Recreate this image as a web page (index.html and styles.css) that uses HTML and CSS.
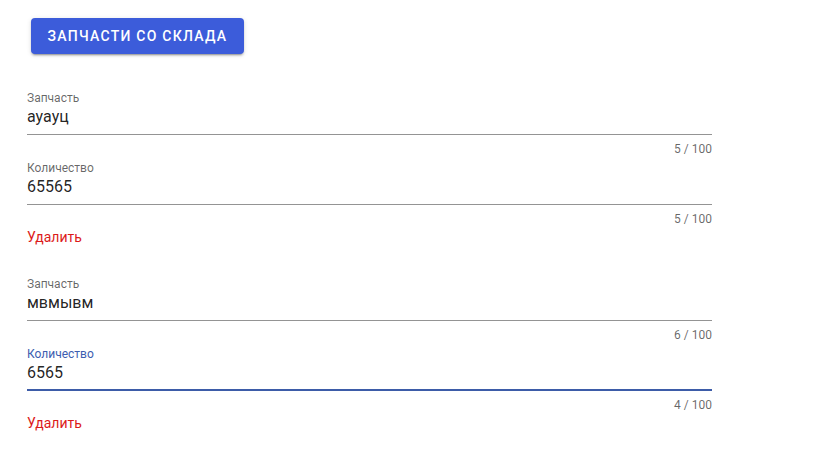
FILE: index.html
```html
<!DOCTYPE html>
<html lang="ru">
<head>
<meta charset="utf-8">
<title>Запчасти</title>
<link rel="stylesheet" href="styles.css">
</head>
<body>
<main class="page">
  <button class="btn-primary" type="button">Запчасти со склада</button>

  <section class="group">
    <div class="field">
      <label class="field-label">Запчасть</label>
      <div class="field-slot"><input class="field-input" type="text" value="ауауц" readonly></div>
      <div class="field-details"><span class="counter">5 / 100</span></div>
    </div>
    <div class="field">
      <label class="field-label">Количество</label>
      <div class="field-slot"><input class="field-input" type="text" value="65565" readonly></div>
      <div class="field-details"><span class="counter">5 / 100</span></div>
    </div>
    <a class="remove" href="#">Удалить</a>
  </section>

  <section class="group">
    <div class="field">
      <label class="field-label">Запчасть</label>
      <div class="field-slot"><input class="field-input" type="text" value="мвмывм" readonly></div>
      <div class="field-details"><span class="counter">6 / 100</span></div>
    </div>
    <div class="field field-focused">
      <label class="field-label">Количество</label>
      <div class="field-slot"><input class="field-input" type="text" value="6565" readonly></div>
      <div class="field-details"><span class="counter">4 / 100</span></div>
    </div>
    <a class="remove" href="#">Удалить</a>
  </section>
</main>
</body>
</html>
```

FILE: styles.css
```css
html, body {
  margin: 0;
  padding: 0;
  background: #ffffff;
}

body {
  font-family: Roboto, "Liberation Sans", Arial, sans-serif;
  color: rgba(0, 0, 0, 0.87);
}

.page {
  width: 685px;
  padding: 18px 0 0 27px;
  display: flex;
  flex-direction: column;
  align-items: flex-start;
}

.btn-primary {
  margin-left: 4px;
  height: 36px;
  padding: 0 16.5px;
  border: none;
  border-radius: 4px;
  background: #3c5cda;
  color: #ffffff;
  font-family: inherit;
  font-size: 14px;
  font-weight: 500;
  letter-spacing: 0.0892857em;
  text-transform: uppercase;
  box-shadow: 0 3px 1px -2px rgba(0, 0, 0, 0.2), 0 2px 2px 0 rgba(0, 0, 0, 0.14), 0 1px 5px 0 rgba(0, 0, 0, 0.12);
  cursor: pointer;
}

.group {
  align-self: stretch;
  display: flex;
  flex-direction: column;
  gap: 6px;
  margin-top: 37px;
}

.group + .group {
  margin-top: 30px;
}

.field {
  display: flex;
  flex-direction: column;
}

.field-label {
  font-size: 12px;
  line-height: 14px;
  height: 14px;
  color: rgba(0, 0, 0, 0.6);
}

.field-slot {
  padding: 2px 0 7px;
  border-bottom: 1px solid rgba(0, 0, 0, 0.42);
}

.field-input {
  display: block;
  width: 100%;
  margin: 0;
  padding: 0;
  border: none;
  outline: none;
  background: transparent;
  font-family: inherit;
  font-size: 16px;
  line-height: 20px;
  height: 20px;
  color: rgba(0, 0, 0, 0.87);
}

.field-focused .field-label {
  color: #3d5db0;
}

.field-focused .field-slot {
  padding-bottom: 6px;
  border-bottom: 2px solid #3d5ca8;
}

.field-details {
  display: flex;
  justify-content: flex-end;
  margin-top: 8px;
  height: 12px;
}

.counter {
  font-size: 12px;
  line-height: 12px;
  color: rgba(0, 0, 0, 0.6);
}

.remove {
  margin-top: -4px;
  font-size: 14px;
  line-height: 20px;
  color: #dc1a1a;
  text-decoration: none;
  align-self: flex-start;
}
```
